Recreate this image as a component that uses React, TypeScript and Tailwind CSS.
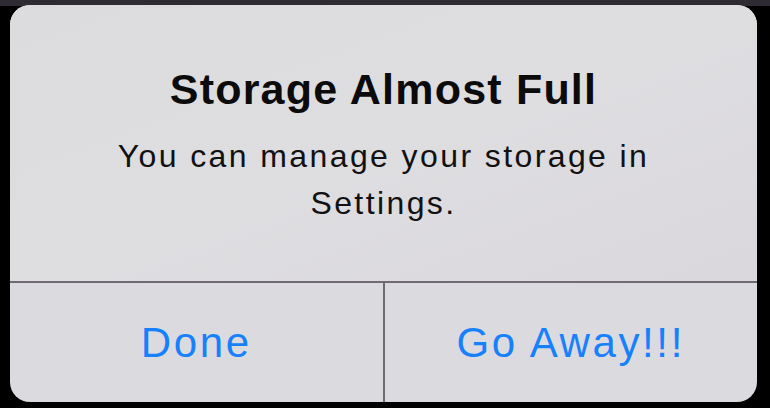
export default function App() {
  return (
    <div className="w-[770px] h-[408px] bg-black pl-[10px] pr-[13px] pt-[5px] pb-[6px] bg-gradient-to-b from-[#2e2b33] from-[1.5%] to-black to-[1.5%]">
      <div
        className="w-[747px] h-[397px] rounded-[20px] bg-[#dbdadf] flex flex-col overflow-hidden"
        style={{ fontFamily: '"Liberation Sans", Arial, sans-serif' }}
      >
        {/* message */}
        <div className="h-[276px] flex flex-col items-center pt-[60px] bg-gradient-to-br from-[#dcdcdf] via-[#dedde0] to-[#dad8dd]">
          <h1 className="text-[43px] leading-[48px] font-bold text-[#0b0b0b] tracking-[1.2px]">
            Storage Almost Full
          </h1>
          <p className="mt-[20px] text-[32px] leading-[47px] text-[#111111] text-center tracking-[2.4px]">
            You can manage your storage in
            <br />
            Settings.
          </p>
        </div>

        {/* buttons */}
        <div className="border-t-2 border-[#6f6a73] flex-1 flex">
          <button className="flex-1 flex items-center justify-center text-[42px] text-[#1681fb] tracking-[2.6px] border-r-2 border-[#6f6a73]">
            Done
          </button>
          <button className="flex-1 flex items-center justify-center text-[42px] text-[#1681fb] tracking-[2.6px]">
            Go Away!!!
          </button>
        </div>
      </div>
    </div>
  );
}
